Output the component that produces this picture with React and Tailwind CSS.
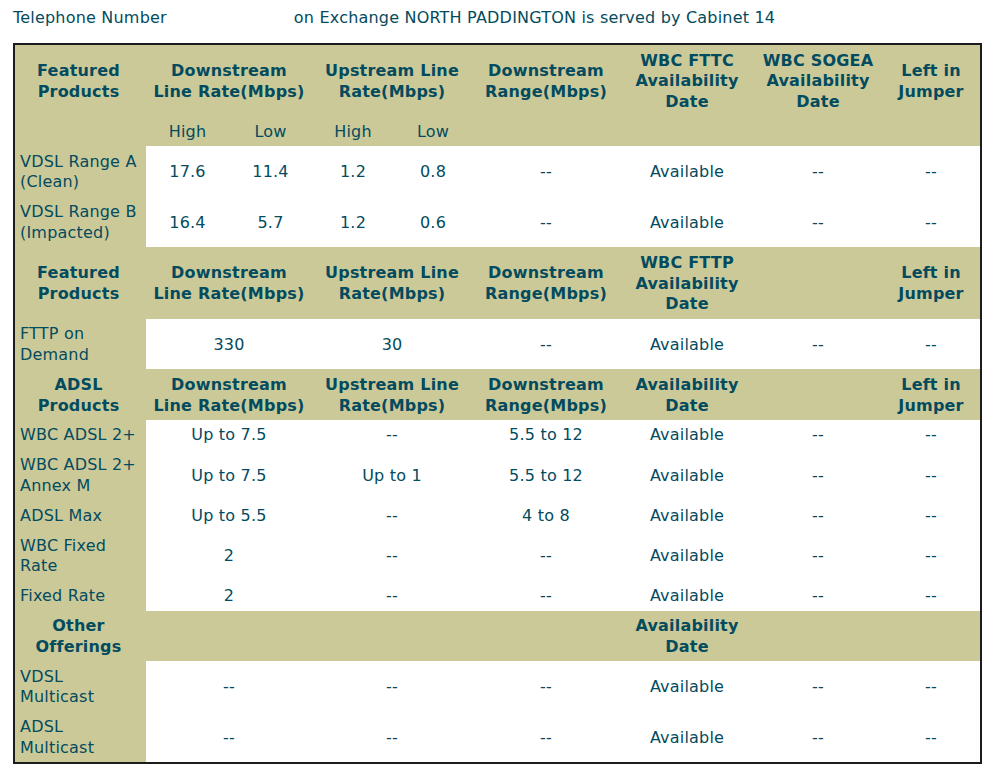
import React from "react";

const H = "bg-[#ccc999] font-bold text-center align-middle pt-[5.5px] pb-[3.5px] px-[4px]";
const HF = "bg-[#ccc999] font-bold text-center align-middle pt-[5.5px] pb-[3.5px] pl-[5px] pr-[9px]";
const L = "bg-[#ccc999] text-left align-middle pt-[5.5px] pb-[3.5px] pl-[5px] pr-[9px]";
const D = "bg-white text-center align-middle pt-[5.5px] pb-[3.5px] px-[4px]";

function br(lines) {
  return lines.map((l, i) => (
    <React.Fragment key={i}>
      {i > 0 && <br />}
      {l}
    </React.Fragment>
  ));
}

export default function App() {
  return (
    <div
      className="bg-white min-h-[776px] pl-[13px] pt-[7px] text-[16px] leading-[1.3] tracking-[0.2px] text-[#034b5e]"
      style={{ fontFamily: '"DejaVu Sans", Verdana, sans-serif' }}
    >
      <div className="leading-[21px] whitespace-nowrap">
        <span>Telephone Number</span>
        <span className="ml-[127px]">on Exchange NORTH PADDINGTON is served by Cabinet 14</span>
      </div>
      <table className="mt-[15px] w-[969px] table-fixed border-separate border-spacing-0 border-2 border-[#1c1c1c] bg-white">
        <colgroup>
          <col className="w-[131px]" />
          <col className="w-[83px]" />
          <col className="w-[83px]" />
          <col className="w-[82px]" />
          <col className="w-[78px]" />
          <col className="w-[148px]" />
          <col className="w-[134px]" />
          <col className="w-[128px]" />
          <col className="w-[98px]" />
        </colgroup>
        <tbody>
          <tr>
            <td className={HF}>{br(["Featured", "Products"])}</td>
            <td className={H} colSpan={2}>{br(["Downstream", "Line Rate(Mbps)"])}</td>
            <td className={H} colSpan={2}>{br(["Upstream Line", "Rate(Mbps)"])}</td>
            <td className={H}>{br(["Downstream", "Range(Mbps)"])}</td>
            <td className={H}>{br(["WBC FTTC", "Availability", "Date"])}</td>
            <td className={H}>{br(["WBC SOGEA", "Availability", "Date"])}</td>
            <td className={H}>{br(["Left in", "Jumper"])}</td>
          </tr>
          <tr>
            <td className={L}></td>
            <td className={`${H} !font-normal`}>High</td>
            <td className={`${H} !font-normal`}>Low</td>
            <td className={`${H} !font-normal`}>High</td>
            <td className={`${H} !font-normal`}>Low</td>
            <td className={H}></td>
            <td className={H}></td>
            <td className={H}></td>
            <td className={H}></td>
          </tr>
          <tr>
            <td className={L}>{br(["VDSL Range A", "(Clean)"])}</td>
            <td className={D}>17.6</td>
            <td className={D}>11.4</td>
            <td className={D}>1.2</td>
            <td className={D}>0.8</td>
            <td className={D}>--</td>
            <td className={D}>Available</td>
            <td className={D}>--</td>
            <td className={D}>--</td>
          </tr>
          <tr>
            <td className={L}>{br(["VDSL Range B", "(Impacted)"])}</td>
            <td className={D}>16.4</td>
            <td className={D}>5.7</td>
            <td className={D}>1.2</td>
            <td className={D}>0.6</td>
            <td className={D}>--</td>
            <td className={D}>Available</td>
            <td className={D}>--</td>
            <td className={D}>--</td>
          </tr>
          <tr>
            <td className={HF}>{br(["Featured", "Products"])}</td>
            <td className={H} colSpan={2}>{br(["Downstream", "Line Rate(Mbps)"])}</td>
            <td className={H} colSpan={2}>{br(["Upstream Line", "Rate(Mbps)"])}</td>
            <td className={H}>{br(["Downstream", "Range(Mbps)"])}</td>
            <td className={H}>{br(["WBC FTTP", "Availability", "Date"])}</td>
            <td className={H}></td>
            <td className={H}>{br(["Left in", "Jumper"])}</td>
          </tr>
          <tr>
            <td className={L}>{br(["FTTP on", "Demand"])}</td>
            <td className={D} colSpan={2}>330</td>
            <td className={D} colSpan={2}>30</td>
            <td className={D}>--</td>
            <td className={D}>Available</td>
            <td className={D}>--</td>
            <td className={D}>--</td>
          </tr>
          <tr>
            <td className={HF}>{br(["ADSL", "Products"])}</td>
            <td className={H} colSpan={2}>{br(["Downstream", "Line Rate(Mbps)"])}</td>
            <td className={H} colSpan={2}>{br(["Upstream Line", "Rate(Mbps)"])}</td>
            <td className={H}>{br(["Downstream", "Range(Mbps)"])}</td>
            <td className={H}>{br(["Availability", "Date"])}</td>
            <td className={H}></td>
            <td className={H}>{br(["Left in", "Jumper"])}</td>
          </tr>
          {[
            [["WBC ADSL 2+"], "Up to 7.5", "--", "5.5 to 12"],
            [["WBC ADSL 2+", "Annex M"], "Up to 7.5", "Up to 1", "5.5 to 12"],
            [["ADSL Max"], "Up to 5.5", "--", "4 to 8"],
            [["WBC Fixed", "Rate"], "2", "--", "--"],
            [["Fixed Rate"], "2", "--", "--"],
          ].map((r, i) => (
            <tr key={i}>
              <td className={L}>{br(r[0])}</td>
              <td className={D} colSpan={2}>{r[1]}</td>
              <td className={D} colSpan={2}>{r[2]}</td>
              <td className={D}>{r[3]}</td>
              <td className={D}>Available</td>
              <td className={D}>--</td>
              <td className={D}>--</td>
            </tr>
          ))}
          <tr>
            <td className={HF}>{br(["Other", "Offerings"])}</td>
            <td className={H} colSpan={2}></td>
            <td className={H} colSpan={2}></td>
            <td className={H}></td>
            <td className={H}>{br(["Availability", "Date"])}</td>
            <td className={H}></td>
            <td className={H}></td>
          </tr>
          {[["VDSL", "Multicast"], ["ADSL", "Multicast"]].map((n, i) => (
            <tr key={i}>
              <td className={L}>{br(n)}</td>
              <td className={D} colSpan={2}>--</td>
              <td className={D} colSpan={2}>--</td>
              <td className={D}>--</td>
              <td className={D}>Available</td>
              <td className={D}>--</td>
              <td className={D}>--</td>
            </tr>
          ))}
        </tbody>
      </table>
    </div>
  );
}
